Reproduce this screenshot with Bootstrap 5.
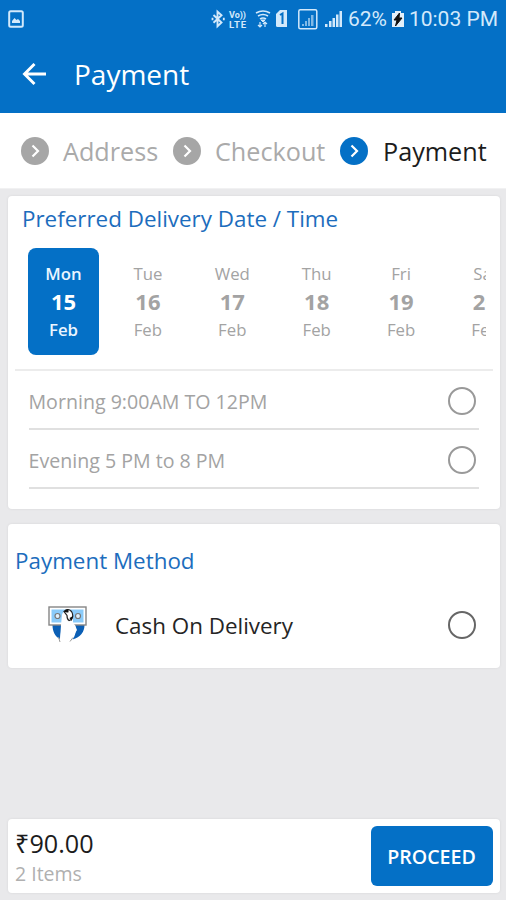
<!DOCTYPE html>
<html lang="en">
<head>
<meta charset="utf-8">
<meta name="viewport" content="width=device-width, initial-scale=1">
<title>Payment</title>
<link href="https://cdn.jsdelivr.net/npm/bootstrap@5.3.0/dist/css/bootstrap.min.css" rel="stylesheet">
<style>
:root{--brand:#0470c6;--muted:#a3a3a3}
body{font-family:"Open Sans","Noto Sans",sans-serif;background:#e9e9eb;color:#1c1c1c;height:900px;overflow:hidden;line-height:1}
svg{display:block;flex:none}
.app-top{background:var(--brand);color:#fff;height:113px}
.status{height:37px;padding:0 8px;color:#d3e9fb;font-family:Roboto,sans-serif;font-size:21px}
.status span{padding-top:2px}
.title-bar{height:76px;padding:0 22px}
.title-bar h1{font-size:28px;font-weight:400;line-height:36px;margin-left:27px;padding-bottom:2px}
.steps{height:76px;background:#fff;padding-left:21px;font-size:25.2px;color:#aaa;border-bottom:1px solid #f1f1f2}
.steps span{white-space:nowrap;padding-top:2px}
.panel{margin:0 6.5px 0 8px;background:#fff;border:0;border-radius:4px;box-shadow:0 0 3px rgba(0,0,0,.08)}
.panel h2{color:#1c6dbd;font-size:22.4px;font-weight:400;line-height:30px;margin:0}
.days{margin:14px 14px 0 20px;overflow:hidden;height:107px;gap:13.4px}
.day{flex:0 0 71px;height:107px;border-radius:8px;color:var(--muted);font-size:16.8px;padding-top:12px}
.day div{line-height:28px}
.day b{font-size:22px;font-weight:700;display:block;line-height:27px;padding-bottom:1px}
.day.on{background:var(--brand);color:#fff}
.day.on div{font-weight:600;color:#eaf5ff}
.rule{height:2px;margin:14px 7px 0;background:#ececec}
.slot{height:59px;margin:0 20.5px;border-bottom:2px solid #e0e0e0;color:var(--muted);font-size:19.6px;padding-right:3px}
.slot span{padding-top:4px}
.slot .ring{margin-top:2px}
.ring{width:28px;height:28px;border:2.5px solid #999;border-radius:50%;flex:none}
.ring.dark{border-color:#666}
.pay{height:68px;color:#252525;font-size:22.4px;padding:0 24px 0 40px}
.pay span{margin-left:27px;padding-top:2px}
.total{height:74px;padding:0 7px}
.amount{font-size:25.2px;line-height:30px;padding-top:3px}
.items{font-size:19.5px;line-height:30px;padding-top:1px;margin-bottom:-1px;color:#b0b0b0}
.go{width:122px;height:60px;border-radius:6px;background:var(--brand);color:#fff;font-size:19.6px;font-weight:600;padding:2px 0 0;border:0}
</style>
</head>
<body class="d-flex flex-column">
<header class="app-top">
 <div class="status d-flex align-items-center">
  <svg width="16" height="18" viewBox="0 0 16 18"><rect x="1.2" y="1.2" width="13.6" height="15.6" rx="1.5" fill="none" stroke="currentColor" stroke-width="2"/><path d="M4 13v-2l2.500-3 2 2 1.500-1 2 2v2z" fill="currentColor"/></svg>
  <div class="d-flex align-items-center ms-auto">
   <svg width="76" height="22" viewBox="0 0 76 22" fill="none" stroke="currentColor"><path d="M2.500 7l8 7.500-4 3.800V3.700l4 3.500-8 7.500" stroke-width="1.900"/><path d="M1.500 9.800v2.400M12.800 9.800v2.400" stroke-width="1.800"/>
    <g fill="currentColor" stroke="none" font-family="Roboto" font-weight="700"><text x="18" y="10" font-size="9" textLength="17">Vo))</text><text x="18" y="19.500" font-size="9.500" textLength="17">LTE</text></g>
    <path d="M45 5q7-4 14 0M47 8q5-3 10 0M49 11q3-2 6 0" stroke-width="1.600"/><path d="M50 12l2 2 2-2z" fill="currentColor"/><path d="M49 14v5M47 17l2 2 2-2M54 19v-5M52 16l2-2 2 2" stroke-width="1.200"/>
    <path d="M65 6l4-4h7q1.500 0 1.500 1.500v14q0 1.500-1.500 1.500H66.500q-1.500 0-1.500-1.500z" fill="currentColor" stroke="none"/><path d="M69 7l2.500-1.500V16" stroke="#0470c6" stroke-width="2"/></svg>
   <svg width="57" height="22" viewBox="0 0 57 22" fill="currentColor"><rect x="11.800" y="1.800" width="18" height="19" rx="1.500" fill="none" stroke="currentColor" stroke-width="1.500"/><g opacity=".6"><path d="M15 16h2v2h-2zM18 13h2v5h-2zM21 10h2v8h-2zM24 7h2.500v11H24z"/></g><path d="M38 16h2.500v3H38zM42 13h2.500v6H42zM45.500 10h2.500v9h-2.500zM49 6.500h2.500v12.500h-2.500zM52.500 3h2.500v16h-2.500z"/></svg>
   <span class="ms-1">62%</span>
   <svg class="mx-1" width="14" height="18" viewBox="0 0 14 18"><path d="M1 3h3V1h6v2h3v14H1z" fill="#e3f0fa"/><path d="M8.500 3L3 10h3l-1.500 6L11 8H8z" fill="#111" stroke="#111"/></svg>
   <span class="text-nowrap">10:03 PM</span>
  </div>
 </div>
 <div class="title-bar d-flex align-items-center">
  <svg width="25" height="24" viewBox="0 0 25 24" fill="none" stroke="currentColor" stroke-width="2.900"><path d="M24 11H3M12.500 1L2.500 11l10 10"/></svg>
  <h1 class="mb-0">Payment</h1>
 </div>
</header>
<nav class="steps d-flex align-items-center">
 <svg width="28" height="28" viewBox="0 0 28 28"><circle cx="14" cy="14" r="14" fill="#a6a6a6"/><path d="M11.500 8.500l5.500 5.500-5.500 5.500" fill="none" stroke="#fff" stroke-width="2.200"/></svg>
 <span style="margin-left:14px;width:110px">Address</span>
 <svg width="28" height="28" viewBox="0 0 28 28"><circle cx="14" cy="14" r="14" fill="#a6a6a6"/><path d="M11.500 8.500l5.500 5.500-5.500 5.500" fill="none" stroke="#fff" stroke-width="2.200"/></svg>
 <span style="margin-left:14px;width:125px">Checkout</span>
 <svg width="28" height="28" viewBox="0 0 28 28"><circle cx="14" cy="14" r="14" fill="#0470c6"/><path d="M11.500 8.500l5.500 5.500-5.500 5.500" fill="none" stroke="#fff" stroke-width="2.200"/></svg>
 <span style="margin-left:15px;color:#1c1c1c">Payment</span>
</nav>
<main>
 <section class="panel card" style="margin-top:7px;height:313px">
  <h2 style="padding:8px 0 0 14px">Preferred Delivery Date / Time</h2>
  <div class="days d-flex text-center">
   <div class="day on"><div>Mon</div><b>15</b><div>Feb</div></div>
   <div class="day"><div>Tue</div><b>16</b><div>Feb</div></div>
   <div class="day"><div>Wed</div><b>17</b><div>Feb</div></div>
   <div class="day"><div>Thu</div><b>18</b><div>Feb</div></div>
   <div class="day"><div>Fri</div><b>19</b><div>Feb</div></div>
   <div class="day"><div>Sat</div><b>20</b><div>Feb</div></div>
  </div>
  <div class="rule"></div>
  <div class="slot d-flex align-items-center justify-content-between"><span>Morning 9:00AM TO 12PM</span><i class="ring"></i></div>
  <div class="slot d-flex align-items-center justify-content-between"><span>Evening 5 PM to 8 PM</span><i class="ring"></i></div>
 </section>
 <section class="panel card" style="margin-top:15px;height:144px">
  <h2 style="padding:22px 0 0 7px;margin-bottom:-1px">Payment Method</h2>
  <div class="pay d-flex align-items-center mt-3">
   <svg width="40" height="38" viewBox="0 0 40 38"><path d="M4.500 19H14l-2 14C7 31 4.500 25 4.500 19zM27 19h9.500c0 7-4 12-12 14.500 3-4 4-8 2.500-14.500z" fill="#0b5fb5"/><rect x="1" y="1" width="37" height="18" fill="#fff" stroke="#858585" stroke-width="1.400"/><rect x="3.500" y="3.500" width="32" height="13" fill="#8acbfa"/><g fill="#dff1ff" stroke="#777" stroke-width="1.200"><circle cx="9.500" cy="10" r="2.500"/><circle cx="30" cy="10" r="2.500"/></g><path d="M14 9q1-4 4-3l2 4q2 4 5 1v5q0 2 2 3l2 5-6 10H12l1-15z" fill="#fff"/><path d="M16 5.500q4-4 7.500 0 2.500 4 0 8l-2.500 1q-2-1-2-5l-3-4z" fill="#fff" stroke="#222" stroke-width="1.200"/><path d="M16 5.500q2-3 4.500-2.200v3q-2 .7-4.500-.8zM21.500 12l3.500-2-1.500 5z" fill="#111"/><path d="M10.500 31l1.500 5M25 31.500l-3 4" fill="none" stroke="#999"/></svg>
   <span>Cash On Delivery</span><i class="ring dark ms-auto"></i>
  </div>
 </section>
</main>
<footer class="panel card mt-auto" style="margin-bottom:7px">
 <div class="total d-flex align-items-center justify-content-between">
  <div><div class="amount">₹90.00</div><div class="items">2 Items</div></div>
  <button class="btn go">PROCEED</button>
 </div>
</footer>
<script src="https://cdn.jsdelivr.net/npm/bootstrap@5.3.0/dist/js/bootstrap.bundle.min.js"></script>
</body>
</html>
